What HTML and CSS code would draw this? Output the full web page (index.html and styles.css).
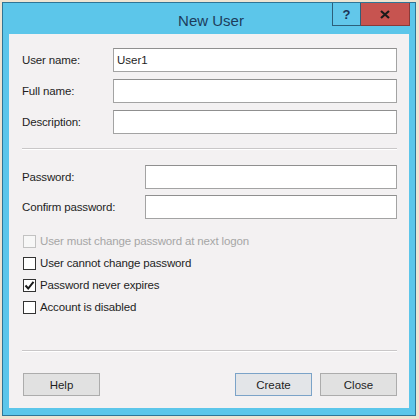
FILE: index.html
```html
<!DOCTYPE html>
<html lang="en">
<head>
  <meta charset="UTF-8" />
  <title>New User</title>
  <link rel="stylesheet" href="styles.css">
</head>
<body>
  <div class="window">
    <div class="caption">
      <span></span>
      <div class="title">New User</div>
      <div class="caption-buttons">
        <div class="cap-btn help-btn">?</div>
        <div class="cap-btn close-btn">
          <svg width="10" height="9" viewBox="0 0 10 9"><path d="M1 1 L9 8 M9 1 L1 8" stroke="#1a1a1a" stroke-width="2.2"/></svg>
        </div>
      </div>
    </div>

    <div class="content">
      <div class="group group-user">
        <label class="row"><span>User name:</span><input type="text" value="User1"></label>
        <label class="row"><span>Full name:</span><input type="text"></label>
        <label class="row"><span>Description:</span><input type="text"></label>
      </div>

      <hr class="sep">

      <div class="group group-pass">
        <label class="row"><span>Password:</span><input type="password"></label>
        <label class="row"><span>Confirm password:</span><input type="password"></label>
      </div>

      <div class="checks">
        <div class="check disabled"><span class="box"></span>User must change password at next logon</div>
        <div class="check"><span class="box"></span>User cannot change password</div>
        <div class="check"><span class="box">
          <svg width="11" height="11" viewBox="0 0 11 11"><path d="M1.5 5.5 L4.2 8.5 L9.5 1.8" fill="none" stroke="#1a1a1a" stroke-width="2"/></svg>
        </span>Password never expires</div>
        <div class="check"><span class="box"></span>Account is disabled</div>
      </div>

      <hr class="sep sep-bottom">

      <div class="buttons">
        <button>Help</button>
        <span class="spacer"></span>
        <button class="default">Create</button>
        <button>Close</button>
      </div>
    </div>
  </div>
</body>
</html>
```

FILE: styles.css
```css
* {
  box-sizing: border-box;
}
body {
  margin: 0;
  background: #eee4d2;
  font-family: 'Liberation Sans', Arial, sans-serif;
  font-size: 11.5px;
  letter-spacing: -0.15px;
  color: #1e1e1e;
}
.window {
  margin: 2px 0 0 2px;
  width: 414px;
  height: 414px;
  border: 1px solid #2f7596;
  background: #5cc6ea;
  padding: 0 6px 7px 6px;
  display: flex;
  flex-direction: column;
}
.caption {
  height: 31px;
  display: grid;
  grid-template-columns: 1fr auto 1fr;
  margin: 0 -1px 0 0;
}
.title {
  font-size: 15px;
  letter-spacing: 0;
  color: #1d3d5c;
  padding-top: 9px;
  padding-left: 3px;
}
.caption-buttons {
  justify-self: end;
  display: flex;
  height: 23px;
}
.cap-btn {
  display: flex;
  align-items: center;
  justify-content: center;
  border: 1px solid #2d5f7a;
  border-top: none;
}
.help-btn {
  width: 29px;
  background: #62c7ea;
  color: #1b3357;
  font-weight: bold;
  font-size: 13px;
}
.close-btn {
  width: 49px;
  background: #c75450;
  border-left: none;
  border-color: #8a3a38;
}
.content {
  flex: 1;
  background: #f3f1f2;
  padding: 14px 12px 0 13px;
  display: flex;
  flex-direction: column;
}
.group {
  display: flex;
  flex-direction: column;
  gap: 7px;
}
.group-pass {
  gap: 6px;
}
.row {
  display: flex;
  align-items: center;
  height: 24px;
}
.row span {
  flex: none;
}
.group-user .row span {
  width: 91px;
}
.group-pass .row span {
  width: 123px;
}
.row input {
  flex: 1;
  height: 24px;
  border: 1px solid #a3a3a3;
  border-top-color: #8f8f8f;
  background: #fff;
  font: inherit;
  padding: 0 3px;
  margin: 0;
  color: #1e1e1e;
}
.sep {
  border: none;
  border-top: 1px solid #c9c7c8;
  border-bottom: 1px solid #fff;
  margin: 14px 0 15px 0;
}
.checks {
  margin-top: 11px;
  display: flex;
  flex-direction: column;
}
.check {
  height: 22px;
  display: flex;
  align-items: center;
  gap: 4px;
  padding-left: 1px;
}
.box {
  width: 13px;
  height: 13px;
  border: 1px solid #333;
  background: #fff;
  display: flex;
  align-items: center;
  justify-content: center;
}
.check.disabled {
  color: #a6a6a6;
}
.check.disabled .box {
  border-color: #c2c2c2;
  background: #f7f7f7;
}
.sep-bottom {
  margin: 32px 0 21px 0;
}
.buttons {
  display: flex;
  gap: 8px;
  padding-left: 1px;
}
.spacer {
  flex: 1;
}
button {
  width: 77px;
  height: 23px;
  background: #e1e1e1;
  border: 1px solid #acacac;
  font: inherit;
  color: #1e1e1e;
  padding: 0;
}
button.default {
  border-color: #7ba3c8;
  background: #e3e5e8;
}
```
